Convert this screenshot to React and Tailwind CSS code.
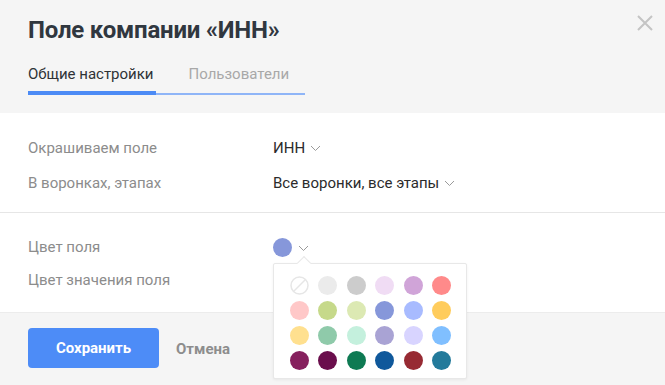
import React from "react";

const colors = [
  null, "#ebebeb", "#cccccc", "#f0dcf4", "#d0a4d8", "#ff8a8a",
  "#ffc8c8", "#c6d98a", "#dce9b3", "#8697da", "#a8bbff", "#ffcc5c",
  "#ffe08f", "#8fcaaa", "#c4f0dd", "#a9a3d4", "#d8d4ff", "#80bfff",
  "#86205e", "#6a0e4c", "#0e7a53", "#0f589b", "#972a33", "#237a9b",
];

function Chevron({ className = "" }) {
  return (
    <svg width="11" height="7" viewBox="0 0 11 7" className={className}>
      <path d="M1 1l4.5 4.5L10 1" fill="none" stroke="#9a9a9a" strokeWidth="1" />
    </svg>
  );
}

export default function App() {
  return (
    <div
      className="relative w-[665px] h-[385px] overflow-hidden bg-white"
      style={{ fontFamily: "Roboto, 'Noto Sans', sans-serif" }}
    >
      {/* Header */}
      <div className="h-[113px] bg-[#f5f5f5] pl-7 pt-[15px]">
        <h1 className="text-[24px] leading-[30px] font-bold text-[#30373f] tracking-[-0.2px]">
          Поле компании «ИНН»
        </h1>
        <div className="mt-[19px] flex items-start">
          <div className="flex flex-col">
            <span className="text-[15px] leading-[20px] text-[#2e3236] pr-[2px]">Общие настройки</span>
            <div className="mt-[7px] h-[4px] bg-[#4c8bf5]" />
          </div>
          <div className="flex flex-col w-[149px]">
            <span className="pl-[33px] text-[15px] leading-[20px] text-[#a8a8a8]">Пользователи</span>
            <div className="mt-[9px] h-[2px] bg-[#8fb5f7]" />
          </div>
        </div>
      </div>

      {/* Section 1 */}
      <div className="h-[100px] border-b border-[#e6e6e6] pl-7 pt-[25px] text-[15px] leading-[20px]">
        <div className="flex items-center h-[20px]">
          <span className="w-[245px] text-[#8c8c8c]">Окрашиваем поле</span>
          <span className="text-[#2b2b2b]">ИНН</span>
          <Chevron className="ml-[5px] mt-[1px]" />
        </div>
        <div className="flex items-center h-[20px] mt-[15px]">
          <span className="w-[245px] text-[#8c8c8c]">В воронках, этапах</span>
          <span className="text-[#2b2b2b]">Все воронки, все этапы</span>
          <Chevron className="ml-[5px] mt-[1px]" />
        </div>
      </div>

      {/* Section 2 */}
      <div className="h-[99px] pl-7 pt-[24px] text-[15px] leading-[20px]">
        <div className="flex items-center h-[20px]">
          <span className="w-[245px] text-[#8c8c8c]">Цвет поля</span>
          <span className="w-[19px] h-[19px] rounded-full bg-[#8697da]" />
          <Chevron className="ml-[6px] mt-[2px]" />
        </div>
        <div className="flex items-center h-[20px] mt-[13px]">
          <span className="w-[245px] text-[#8c8c8c]">Цвет значения поля</span>
        </div>
      </div>

      {/* Footer */}
      <div className="h-[73px] bg-[#f5f5f5] border-t border-[#ececec] pl-7 pt-[15px] flex items-start">
        <button className="w-[131px] h-[40px] rounded-[4px] bg-[#4d8cf7] text-white text-[15px] font-bold">
          Сохранить
        </button>
        <span className="ml-[17px] mt-[10px] text-[15px] font-bold text-[#8d8d8d]">Отмена</span>
      </div>

      {/* Close */}
      <button className="absolute left-[636px] top-[14px] w-[18px] h-[18px]">
        <svg width="18" height="18" viewBox="0 0 18 18">
          <path d="M2 2l14 14M16 2L2 16" stroke="#c4c4c4" strokeWidth="2" />
        </svg>
      </button>

      {/* Color popup */}
      <div className="absolute left-[273px] top-[263px] w-[194px] h-[116px] bg-white border border-[#e8e8e8] rounded-[2px] shadow-[0_1px_3px_rgba(0,0,0,0.06)]">
        <div className="absolute left-[25px] -top-[6px] w-[10px] h-[10px] bg-white border-l border-t border-[#e8e8e8] rotate-45" />
        <div className="grid grid-cols-[repeat(6,19px)] gap-x-[9.4px] gap-y-[6px] pl-[16px] pt-[12px]">
          {colors.map((c, i) =>
            c ? (
              <span key={i} className="w-[19px] h-[19px] rounded-full" style={{ background: c }} />
            ) : (
              <span key={i} className="w-[19px] h-[19px]">
                <svg width="19" height="19" viewBox="0 0 19 19">
                  <circle cx="9.5" cy="9.5" r="8.5" fill="none" stroke="#e6e6e6" strokeWidth="1.5" />
                  <path d="M3.5 15.5L15.5 3.5" stroke="#e6e6e6" strokeWidth="1.5" />
                </svg>
              </span>
            )
          )}
        </div>
      </div>
    </div>
  );
}
